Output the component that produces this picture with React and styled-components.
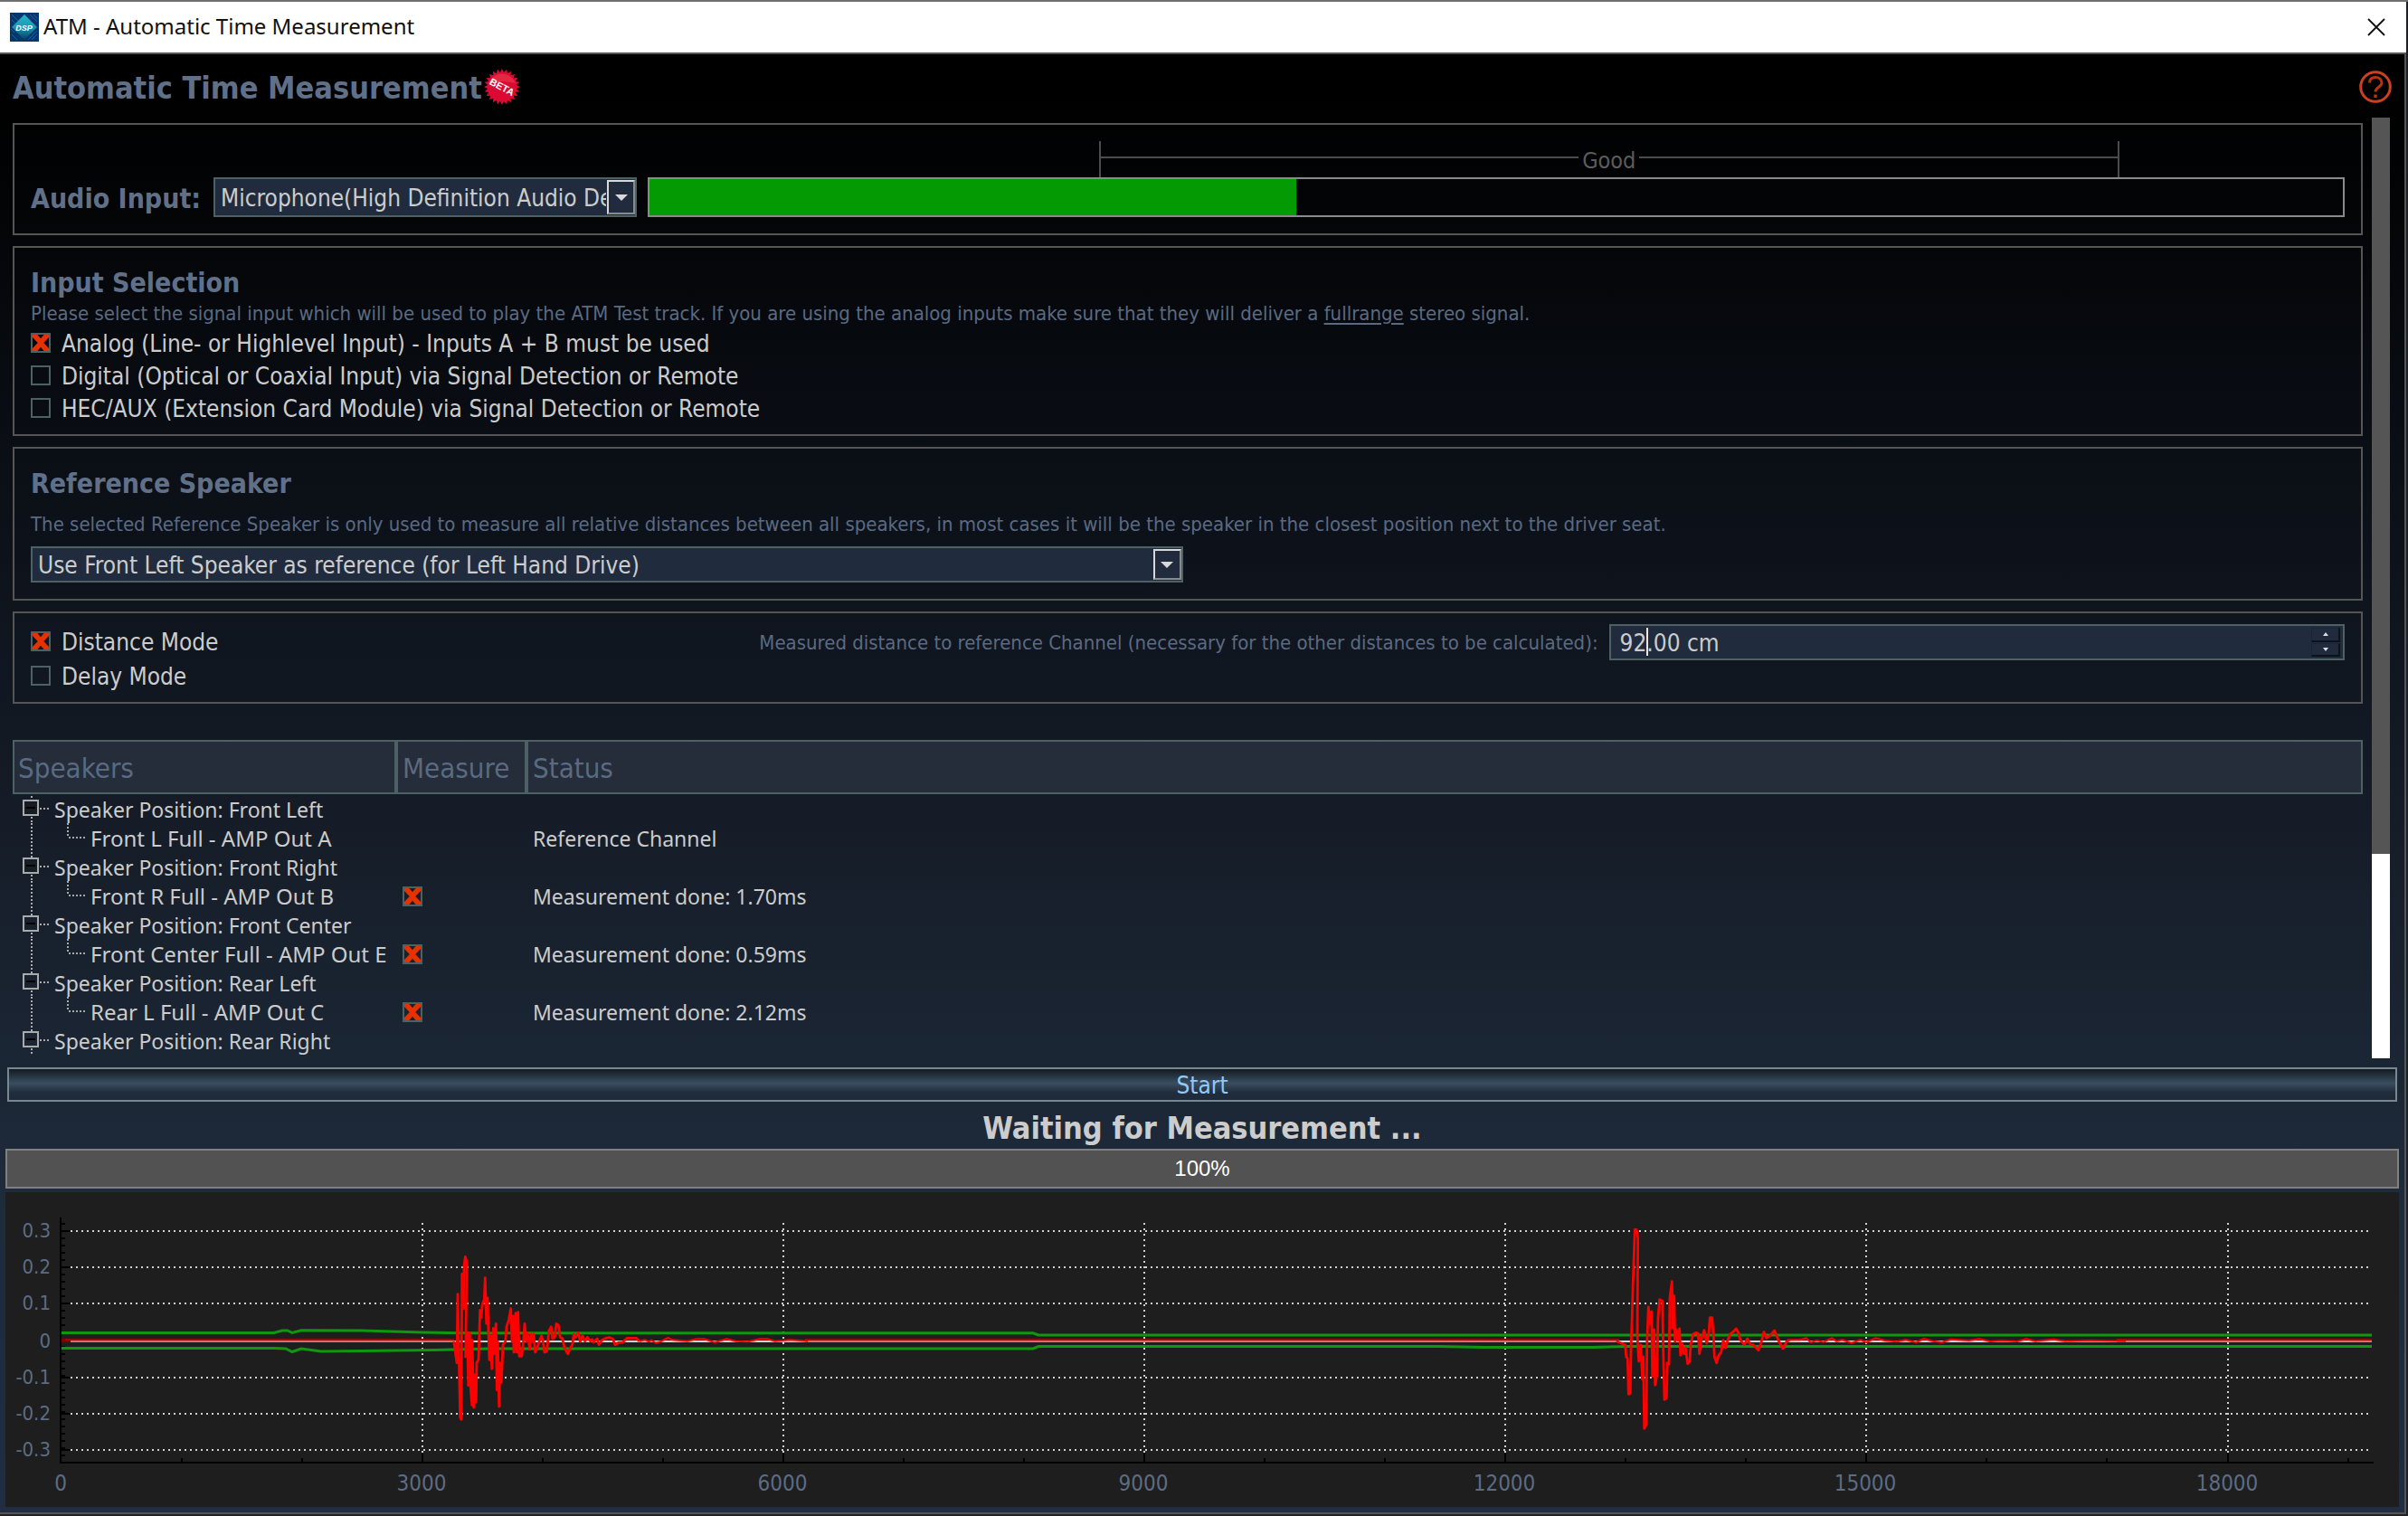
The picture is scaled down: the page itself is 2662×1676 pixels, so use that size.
import React from "react";
import styled, { createGlobalStyle, css } from "styled-components";

const ui = `"DejaVu Sans Condensed", "DejaVu Sans", sans-serif`;
const system = `"Noto Sans", "Open Sans", sans-serif`;

const GlobalStyle = createGlobalStyle`
  * { box-sizing: border-box; }
  body { margin: 0; background: #1c1f26; font-family: ${ui}; color: #cccccc; }
  button, input, select { font: inherit; color: inherit; margin: 0; }
`;

const Window = styled.div`
  height: 100vh;
  display: flex;
  flex-direction: column;
  border-top: 2px solid #6f6f6f;
  border-bottom: 2px solid #22202a;
`;

const TitleBar = styled.header`
  flex: none;
  height: 56px;
  display: flex;
  align-items: center;
  gap: 5px;
  padding: 0 23px 0 11px;
  margin-right: 2px;
  background: #ffffff;
  color: #111111;
  font-family: ${system};
  font-size: 24px;
  line-height: 32px;
`;

const TitleText = styled.span`
  flex: 1;
  padding-bottom: 2px;
`;

const PlainButton = styled.button`
  display: flex;
  padding: 0;
  border: 0;
  background: none;
  svg { display: block; }
`;

const Body = styled.main`
  flex: 1;
  min-height: 0;
  display: flex;
  flex-direction: column;
  margin-right: 2px;
  padding: 0 6px 6px;
  border-top: 2px solid #555555;
  border-right: 2px solid #555555;
  border-bottom: 2px solid #555555;
  background: linear-gradient(#000000 0%, #000000 3%, #0a0e15 27%, #151c27 52%, #1e2b3b 78%, #202d42 100%);
`;

const PageHead = styled.div`
  flex: none;
  height: 70px;
  display: flex;
  align-items: center;
  padding: 2px 8px 0;
  svg { display: block; }
`;

const PageTitle = styled.h1`
  margin: 0 2px 0 0;
  padding-top: 2px;
  font-size: 34px;
  line-height: 40px;
  font-weight: bold;
  color: #607088;
`;

const HeadSpace = styled.div`
  flex: 1;
`;

const Pane = styled.div`
  flex: 1;
  min-height: 0;
  display: flex;
  gap: 10px;
  padding: 0 10px 0 8px;
`;

const PaneContent = styled.div`
  flex: 1;
  min-width: 0;
  display: flex;
  flex-direction: column;
  gap: 12px;
  padding-top: 6px;
  overflow: hidden;
`;

const ScrollTrack = styled.div`
  flex: none;
  width: 20px;
  display: flex;
  flex-direction: column;
  justify-content: flex-end;
  background: #555555;
`;

const ScrollThumb = styled.div`
  height: 21.7%;
  background: #ffffff;
`;

const Group = styled.section`
  flex: none;
  display: flex;
  flex-direction: column;
  padding: ${(p) => (p.$tight ? "12px" : "18px")} 18px 18px;
  border: 2px solid #555555;
`;

const GroupTitle = styled.h2`
  margin: 0;
  font-size: 30px;
  line-height: 42px;
  font-weight: bold;
  color: #607088;
`;

const Hint = styled.p`
  margin: ${(p) => (p.$spaced ? "11px 0 12px" : "0 0 9px")};
  font-size: 22px;
  line-height: 25px;
  color: #5a6a82;
  u { text-underline-offset: 3px; }
`;

const InputRow = styled.div`
  display: flex;
  align-items: flex-end;
`;

const InputLabel = styled.label`
  width: 202px;
  height: 44px;
  padding-top: 2px;
  font-size: 30px;
  line-height: 44px;
  font-weight: bold;
  color: #607088;
`;

const SelectBox = styled.div`
  position: relative;
  flex: none;
  width: ${(p) => p.$width};
  height: ${(p) => p.$height};
`;

const Select = styled.select`
  appearance: none;
  display: block;
  width: 100%;
  height: 100%;
  padding: 2px 32px 0 6px;
  border: 2px solid #4d6164;
  border-radius: 0;
  background: #202c3e;
  font-size: 26px;
`;

const SelectArrow = styled.span`
  position: absolute;
  top: 3px;
  right: 2px;
  bottom: 3px;
  width: 31px;
  display: flex;
  align-items: center;
  justify-content: center;
  border: 2px solid #d8d8d8;
  border-bottom-color: #8a8a8a;
  border-right-color: #8a8a8a;
  background: #202c3e;
  pointer-events: none;
  &::after {
    content: "";
    border: 7px solid transparent;
    border-top-color: #d8d8d8;
    border-bottom: 0;
  }
`;

const MeterColumn = styled.div`
  flex: 1;
  margin-left: 12px;
`;

const GoodRange = styled.div`
  display: flex;
  align-items: center;
  gap: 4px;
  height: 40px;
  padding-top: 2px;
  margin: 0 13.3% 0 26.6%;
  border-left: 2px solid #4c4c4c;
  border-right: 2px solid #4c4c4c;
  color: #5c5c5c;
  font-size: 25px;
  &::before, &::after {
    content: "";
    flex: 1;
    height: 2px;
    margin-bottom: 6px;
    background: #4c4c4c;
  }
`;

const Meter = styled.div`
  height: 44px;
  border: 2px solid #8a8a8a;
`;

const MeterFill = styled.div`
  height: 100%;
  background: #049a04;
`;

const CheckList = styled.div`
  display: flex;
  flex-direction: column;
  gap: ${(p) => (p.$spaced ? "16px" : "14px")};
  padding-top: ${(p) => (p.$spaced ? "8px" : "0")};
`;

const CheckLabel = styled.label`
  display: flex;
  align-items: center;
  gap: 12px;
  height: 22px;
  font-size: 26px;
  white-space: nowrap;
`;

const LowText = styled.span`
  padding-top: 2px;
`;

const Check = styled.input.attrs({ type: "checkbox" })`
  appearance: none;
  display: block;
  flex: none;
  width: 22px;
  height: 22px;
  border: 2px solid #4d6164;
  background: transparent;
  &:checked::before {
    content: "";
    display: block;
    width: 18px;
    height: 18px;
    background: #e63200;
    clip-path: polygon(0 0, 30% 0, 50% 24%, 70% 0, 100% 0, 100% 16%, 68% 50%, 100% 84%, 100% 100%, 70% 100%, 50% 76%, 30% 100%, 0 100%, 0 84%, 32% 50%, 0 16%);
  }
`;

const ModeRow = styled.div`
  display: grid;
  grid-template-columns: 1fr auto 31.8%;
  column-gap: 12px;
  align-items: start;
`;

const DistanceLabel = styled.label`
  font-size: 22px;
  line-height: 42px;
  color: #5a6a82;
`;

const Spin = styled.div`
  position: relative;
  display: flex;
  height: 40px;
  padding: 2px 3px 2px 10px;
  border: 2px solid #4d6164;
  background: #202c3e;
`;

const SpinInput = styled.input`
  flex: 1;
  min-width: 0;
  padding: 2px 0 0;
  border: 0;
  background: none;
  font-size: 26px;
`;

const Caret = styled.span`
  position: absolute;
  top: 2px;
  bottom: 3px;
  left: 39px;
  width: 2px;
  background: #f0e6d8;
`;

const SpinButtons = styled.div`
  display: flex;
  flex-direction: column;
  gap: 1px;
  width: 32px;
`;

const SpinButton = styled.button`
  flex: 1;
  display: flex;
  align-items: center;
  justify-content: center;
  padding: 0;
  border: 1px solid #1a2434;
  border-bottom: 2px solid #0c121a;
  border-right: 2px solid #0c121a;
  background: #202c3e;
  &::after {
    content: "";
    border: 3px solid transparent;
    ${(p) =>
      p.$down
        ? css`border-top: 4px solid #dddddd; border-bottom: 0;`
        : css`border-bottom: 4px solid #dddddd; border-top: 0;`}
  }
`;

const SpeakerTable = styled.table`
  width: 100%;
  margin-top: 28px;
  table-layout: fixed;
  border-collapse: separate;
  border-spacing: 0;
`;

const Col = styled.col`
  width: ${(p) => p.$width};
`;

const Th = styled.th`
  height: 60px;
  padding: 2px 0 0 ${(p) => (p.$first ? "4px" : "5px")};
  border: 2px solid #4d6164;
  background: #242d39;
  font-size: 31px;
  line-height: 40px;
  font-weight: normal;
  text-align: left;
  color: #5a6a82;
`;

const Td = styled.td`
  height: 32px;
  padding: ${(p) => (p.$pad ? "2px 0 0 7px" : "0")};
  font-family: ${system};
  font-size: 23px;
  line-height: 30px;
  white-space: nowrap;
`;

const TreeCell = styled.div`
  display: flex;
  align-items: center;
  height: 32px;
  font-size: ${(p) => (p.$child ? "24px" : "23px")};
  svg { display: block; flex: none; }
`;

const StartButton = styled.button`
  flex: none;
  height: 38px;
  margin: 10px 2px 0;
  padding: 2px 0 0;
  border: 2px solid #788890;
  background: linear-gradient(#151a1f 0%, #2a3a4a 28%, #3a4d60 46%, #202d3b 76%, #1e2a3a 100%);
  color: #90c8f8;
  font-size: 26px;
  line-height: 32px;
`;

const Phase = styled.p`
  flex: none;
  margin: 0;
  padding-top: 6px;
  font-size: 34px;
  line-height: 46px;
  font-weight: bold;
  text-align: center;
`;

const Progress = styled.div`
  flex: none;
  height: 44px;
  border: 2px solid #808080;
  background: #525252;
  color: #ffffff;
  font-family: "Liberation Sans", sans-serif;
  font-size: 24px;
  line-height: 40px;
  text-align: center;
`;

const Plot = styled.svg`
  flex: none;
  display: block;
  width: 100%;
  height: auto;
  margin-top: 4px;
  background: #1e1e1e;
`;

const TickText = styled.text`
  fill: #5c6c84;
  font-family: ${ui};
  font-size: ${(p) => (p.$small ? "22px" : "24px")};
  text-anchor: ${(p) => (p.$small ? "end" : "middle")};
`;

const DspLogo = () => (
  <svg width="32" height="32" viewBox="0 0 32 32">
    <defs>
      <linearGradient id="dsp" x1="0" y1="0" x2="0" y2="1">
        <stop offset="0" stopColor="#28b4cc" />
        <stop offset="0.5" stopColor="#1c98b4" />
        <stop offset="1" stopColor="#053c6c" />
      </linearGradient>
    </defs>
    <rect width="32" height="32" fill="#04386c" />
    <path d="M2 2l8 8M2 8l6 6M22 2l8 8M26 2l4 4M2 24l6 6M24 30l6-6M20 30l10-10M1 18l4 4" stroke="#0a64a8" strokeWidth="1" />
    <path d="M16 2L30 16 16 30 2 16z" fill="url(#dsp)" />
    <text x="15.5" y="19.5" textAnchor="middle" fill="#ffffff" fontFamily="Liberation Sans, sans-serif" fontSize="9" fontWeight="bold" fontStyle="italic">DSP</text>
  </svg>
);

const burst = Array.from({ length: 48 }, (_, i) => {
  const r = i % 2 ? 16 : 20;
  const a = (i / 48) * Math.PI * 2;
  return `${(20 + r * Math.sin(a)).toFixed(1)},${(20 - r * Math.cos(a)).toFixed(1)}`;
}).join(" ");

const BetaBadge = () => (
  <svg width="40" height="40" viewBox="0 0 40 40">
    <polygon points={burst} fill="#dc0a32" />
    <path d="M5 16A16 16 0 0 1 35 16Q20 12 5 16z" fill="#e83c50" opacity="0.6" />
    <text x="20" y="24" textAnchor="middle" transform="rotate(28 20 20)" fill="#ffffff" fontFamily="Liberation Sans, sans-serif" fontSize="11" fontWeight="bold">BETA</text>
  </svg>
);

const HelpIcon = () => (
  <svg width="36" height="36" viewBox="0 0 36 36" fill="none" stroke="#cc4020">
    <circle cx="18" cy="18" r="16.3" strokeWidth="3" />
    <path d="M11.500 13.500C11.500 9.500 14 7.500 18 7.500S25 10 25 13.500C25 18 18 18.500 18 23.500" strokeWidth="3" stroke="#b8330f" />
    <path d="M18 26.500v3.500" strokeWidth="3.400" stroke="#b8330f" />
  </svg>
);

const CloseIcon = () => (
  <svg width="20" height="20" viewBox="0 0 20 20" stroke="#111111" strokeWidth="1.8">
    <path d="M1 1L19 19M19 1L1 19" />
  </svg>
);

const ParentBranch = ({ first }) => (
  <svg width="46" height="32" viewBox="0 0 46 32" fill="none" stroke="#aaaaaa">
    <path d={`M21 ${first ? 2 : 0}V6M21 25V32`} strokeWidth="2" strokeDasharray="2 2" />
    <path d="M30 16H41" strokeWidth="2" strokeDasharray="2 2" />
    <rect x="12" y="7" width="16" height="16" strokeWidth="2" />
    <path d="M15 15H25" stroke="#000000" strokeWidth="2" />
  </svg>
);

const ChildBranch = () => (
  <svg width="86" height="32" viewBox="0 0 86 32" fill="none" stroke="#aaaaaa" strokeWidth="2" strokeDasharray="2 2">
    <path d="M21 0V32" />
    <path d="M61 0V16" />
    <path d="M62 16H80" />
  </svg>
);

const rows = [
  { group: "Speaker Position: Front Left" },
  { name: "Front L Full - AMP Out A", status: "Reference Channel" },
  { group: "Speaker Position: Front Right" },
  { name: "Front R Full - AMP Out B", status: "Measurement done: 1.70ms", check: true },
  { group: "Speaker Position: Front Center" },
  { name: "Front Center Full - AMP Out E", status: "Measurement done: 0.59ms", check: true },
  { group: "Speaker Position: Rear Left" },
  { name: "Rear L Full - AMP Out C", status: "Measurement done: 2.12ms", check: true },
  { group: "Speaker Position: Rear Right" },
];

const pulseA = [
  65, 428, 75, 500, 78, 272, 86, 680, 90, 688, 92, 205, 97, 320, 99, 180, 103, 148, 108, 165, 104, 480, 110, 400, 113, 575,
  118, 400, 120, 570, 125, 640, 126, 425, 131, 648, 135, 540, 139, 630, 141, 500, 147, 490, 152, 325, 156, 350, 160, 305,
  166, 290, 169, 218, 173, 370, 177, 285, 180, 400, 183, 490, 187, 410, 191, 520, 196, 385, 200, 470, 205, 370, 208, 590,
  211, 430, 215, 645, 218, 500, 223, 565, 228, 440, 236, 430, 240, 380, 247, 360, 254, 320, 258, 430, 262, 345, 264, 465,
  270, 335, 274, 465, 278, 332, 282, 478, 290, 478, 295, 440, 300, 370, 305, 430, 309, 400, 317, 455, 321, 405, 327, 430,
  330, 405, 335, 465, 342, 450, 348, 430, 356, 410, 361, 430, 366, 465, 373, 462, 376, 440, 380, 395, 388, 380, 392, 420,
  400, 415, 405, 370, 412, 375, 418, 415, 425, 420, 432, 450, 443, 470, 452, 450, 458, 440, 463, 405, 470, 415, 478, 400,
  484, 430, 492, 410, 500, 428, 508, 415, 518, 428, 524, 422, 528, 432, 541, 420, 546, 440, 556, 425, 570, 418, 580, 416,
  592, 420, 600, 440, 612, 433, 625, 432, 640, 418, 670, 418, 680, 428,
];
const tailA = [
  680, 428, 700, 424, 712, 430, 720, 425, 735, 434, 750, 430, 775, 417, 790, 424, 840, 428, 870, 421, 895, 421, 930, 432,
  970, 421, 1000, 428, 1040, 430, 1080, 421, 1105, 421, 1130, 428, 1180, 424, 1240, 428,
];
const pulseB = [
  50, 488, 80, 500, 83, 540, 88, 545, 91, 664, 97, 662, 99, 520, 103, 400, 106, 290, 112, 118, 117, 118, 122, 145, 120, 470,
  125, 555, 131, 500, 134, 555, 137, 615, 140, 540, 143, 778, 150, 765, 152, 500, 157, 375, 162, 430, 167, 390, 170, 605,
  176, 450, 179, 634, 185, 600, 189, 410, 194, 350, 203, 355, 206, 520, 210, 682, 217, 678, 220, 560, 225, 565, 228, 345,
  235, 290, 238, 445, 242, 338, 245, 490, 250, 450, 254, 485, 260, 447, 263, 535, 268, 495, 275, 530, 280, 510, 287, 563,
  294, 555, 297, 500, 305, 465, 315, 460, 322, 462, 326, 530, 333, 480, 342, 452, 350, 495, 357, 465, 361, 410, 368, 410,
  372, 460, 376, 540, 383, 560, 390, 535, 398, 525, 405, 485, 413, 510, 420, 485, 428, 465, 440, 455, 448, 447, 455, 460,
  462, 485, 475, 500, 485, 480, 495, 500, 505, 500, 522, 518, 530, 495, 540, 458, 548, 478, 560, 470, 575, 453, 582, 470,
  590, 490, 603, 513, 615, 490, 625, 484,
];
const tailB = [
  625, 484, 660, 484, 680, 478, 695, 492, 715, 486, 738, 491, 765, 478, 780, 488, 800, 484, 830, 494, 860, 484, 880, 492,
  910, 478, 940, 486, 980, 490, 1010, 484, 1045, 492, 1070, 480, 1100, 488, 1130, 492, 1160, 482, 1220, 486, 1255, 481,
  1290, 489, 1330, 487, 1380, 489, 1410, 481, 1440, 488, 1500, 482, 1540, 488, 1620, 486, 1740, 488,
];
const trace = (pts, x0, y0) => {
  const out = [];
  for (let i = 0; i < pts.length; i += 2) out.push(`${(x0 + pts[i] / 3).toFixed(1)},${(y0 + pts[i + 1] / 3).toFixed(1)}`);
  return out.join(" ");
};

const levels = [
  ["0.3", 1361], ["0.2", 1401], ["0.1", 1441], ["0", 1483], ["-0.1", 1523], ["-0.2", 1563], ["-0.3", 1603],
];
const times = [0, 3000, 6000, 9000, 12000, 15000, 18000];
const tx = (v) => Math.round(67.6 + v * 0.13305);

const Chart = () => (
  <Plot viewBox="6 1318 2646 348" role="img">
    <g stroke="#000000" strokeWidth="2">
      <path d="M67 1346V1617H2624" fill="none" />
      {Array.from({ length: 33 }, (_, i) => (
        <path key={i} d={`M68 ${1353 + i * 8}h4`} />
      ))}
      {levels.map(([t, y]) => (
        <path key={t} d={`M68 ${y}h10`} />
      ))}
      {Array.from({ length: 19 }, (_, i) => (
        <path key={i} d={`M${tx((i + 1) * 1000)} 1616v${(i + 1) % 3 ? -4 : -10}`} />
      ))}
    </g>
    <g stroke="#d0d0d0" strokeWidth="2" strokeDasharray="2 4">
      {levels.filter(([t]) => t !== "0").map(([t, y]) => (
        <path key={t} d={`M78 ${y}H2619`} />
      ))}
      {times.slice(1).map((v) => (
        <path key={v} d={`M${tx(v)} 1352V1606`} />
      ))}
    </g>
    <path d="M78 1483H2622" stroke="#d0d0d0" strokeWidth="2" />
    <g fill="none" stroke="#0f980f" strokeWidth="3">
      <path d="M68 1473.500H303L312 1471 318 1471 323 1473.500 333 1470.800 400 1471 467 1473 520 1473.800 1142 1473.800 1148 1476H2622" />
      <path d="M68 1490.500H303L316 1491 323 1494.500 333 1491 355 1494 400 1493.500 480 1492.500 540 1491 1142 1491 1148 1488.500H1590L1640 1489.500H1760L1800 1488.500H2622" />
    </g>
    <path d="M68 1482H502M890 1482H1790M2340 1482H2622" stroke="#ff0000" strokeWidth="4" opacity="0.5" />
    <g fill="none" stroke="#ff0000" strokeLinejoin="round">
      <polyline points={trace(pulseA, 480, 1340)} strokeWidth="2.8" />
      <polyline points={trace(tailA, 480, 1340)} strokeWidth="2" />
      <polyline points={trace(pulseB, 1770, 1320)} strokeWidth="2.8" />
      <polyline points={trace(tailB, 1770, 1320)} strokeWidth="2" />
    </g>
    {levels.map(([t, y]) => (
      <TickText key={t} $small x="56" y={y + 7}>{t}</TickText>
    ))}
    {times.map((v) => (
      <TickText key={v} x={tx(v) - 1} y="1648">{v}</TickText>
    ))}
  </Plot>
);

const inputs = [
  ["Analog (Line- or Highlevel Input) - Inputs A + B must be used", true],
  ["Digital (Optical or Coaxial Input) via Signal Detection or Remote", false],
  ["HEC/AUX (Extension Card Module) via Signal Detection or Remote", false],
];

export default function App() {
  const level = 38.2;
  return (
    <Window>
      <GlobalStyle />
      <TitleBar>
        <DspLogo />
        <TitleText>ATM - Automatic Time Measurement</TitleText>
        <PlainButton aria-label="Close"><CloseIcon /></PlainButton>
      </TitleBar>
      <Body>
        <PageHead>
          <PageTitle>Automatic Time Measurement</PageTitle>
          <BetaBadge />
          <HeadSpace />
          <PlainButton aria-label="Help"><HelpIcon /></PlainButton>
        </PageHead>
        <Pane>
          <PaneContent>
            <Group>
              <InputRow>
                <InputLabel htmlFor="audio">Audio Input:</InputLabel>
                <SelectBox $width="468px" $height="44px">
                  <Select id="audio">
                    <option>Microphone(High Definition Audio Device)</option>
                  </Select>
                  <SelectArrow />
                </SelectBox>
                <MeterColumn>
                  <GoodRange>Good</GoodRange>
                  <Meter>
                    <MeterFill style={{ width: `${level}%` }} />
                  </Meter>
                </MeterColumn>
              </InputRow>
            </Group>
            <Group>
              <GroupTitle>Input Selection</GroupTitle>
              <Hint>
                Please select the signal input which will be used to play the ATM Test track. If you are using the analog
                inputs make sure that they will deliver a <u>fullrange</u> stereo signal.
              </Hint>
              <CheckList>
                {inputs.map(([text, on]) => (
                  <CheckLabel key={text}>
                    <Check defaultChecked={on} />
                    <LowText>{text}</LowText>
                  </CheckLabel>
                ))}
              </CheckList>
            </Group>
            <Group>
              <GroupTitle>Reference Speaker</GroupTitle>
              <Hint $spaced>
                The selected Reference Speaker is only used to measure all relative distances between all speakers, in most
                cases it will be the speaker in the closest position next to the driver seat.
              </Hint>
              <SelectBox $width="49.8%" $height="40px">
                <Select aria-label="Reference Speaker">
                  <option>Use Front Left Speaker as reference (for Left Hand Drive)</option>
                </Select>
                <SelectArrow />
              </SelectBox>
            </Group>
            <Group $tight>
              <ModeRow>
                <CheckList $spaced>
                  <CheckLabel><Check defaultChecked /><LowText>Distance Mode</LowText></CheckLabel>
                  <CheckLabel><Check /><LowText>Delay Mode</LowText></CheckLabel>
                </CheckList>
                <DistanceLabel htmlFor="distance">
                  Measured distance to reference Channel (necessary for the other distances to be calculated):
                </DistanceLabel>
                <Spin>
                  <SpinInput id="distance" defaultValue="92.00 cm" />
                  <Caret />
                  <SpinButtons>
                    <SpinButton aria-label="Increase" />
                    <SpinButton aria-label="Decrease" $down />
                  </SpinButtons>
                </Spin>
              </ModeRow>
            </Group>
            <SpeakerTable>
              <colgroup>
                <Col $width="424px" />
                <Col $width="144px" />
                <Col $width="auto" />
              </colgroup>
              <thead>
                <tr>
                  <Th $first>Speakers</Th>
                  <Th>Measure</Th>
                  <Th>Status</Th>
                </tr>
              </thead>
              <tbody>
                {rows.map((r, i) => (
                  <tr key={i}>
                    <Td>
                      <TreeCell $child={!r.group}>
                        {r.group ? (
                          <PlainButton aria-label="Collapse"><ParentBranch first={i === 0} /></PlainButton>
                        ) : (
                          <ChildBranch />
                        )}
                        <LowText>{r.group || r.name}</LowText>
                      </TreeCell>
                    </Td>
                    <Td $pad>{r.check && <Check defaultChecked aria-label={r.name} />}</Td>
                    <Td $pad>{r.status}</Td>
                  </tr>
                ))}
              </tbody>
            </SpeakerTable>
          </PaneContent>
          <ScrollTrack><ScrollThumb /></ScrollTrack>
        </Pane>
        <StartButton>Start</StartButton>
        <Phase>Waiting for Measurement ...</Phase>
        <Progress>100%</Progress>
        <Chart />
      </Body>
    </Window>
  );
}
